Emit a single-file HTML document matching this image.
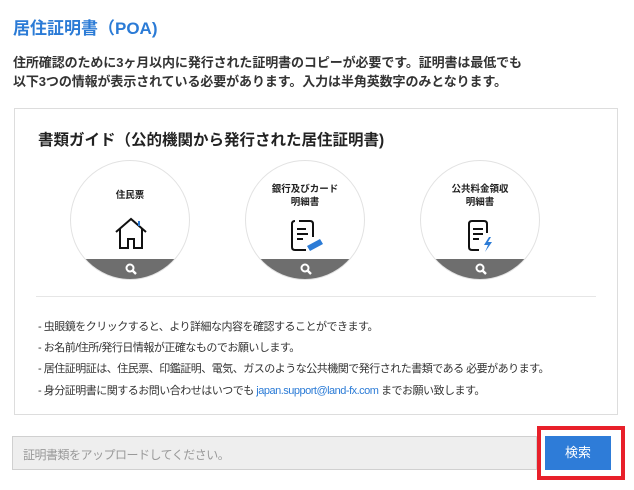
<!DOCTYPE html>
<html><head><meta charset="utf-8"><style>
*{margin:0;padding:0;box-sizing:border-box}
body{width:634px;height:490px;background:#fff;font-family:"Liberation Sans","Noto Sans CJK JP",sans-serif;color:#222;position:relative;overflow:hidden}
.abs{position:absolute;white-space:nowrap}
h1{position:absolute;left:13px;top:14px;font-size:17px;color:#2b7bd6;font-weight:bold}
.p{position:absolute;left:13px;font-size:13px;font-weight:bold;color:#333;letter-spacing:-0.1px}
.box{position:absolute;left:14px;top:108px;width:604px;height:307px;border:1px solid #ddd}
.c{position:absolute;top:160px;width:120px;height:120px;border-radius:50%;border:1px solid #e2e2e2;overflow:hidden;background:#fff}
.c .g{position:absolute;left:0;right:0;top:98px;height:30px;background:#6e6e6e}
.c .t{position:absolute;left:0;right:0;text-align:center;font-size:9.5px;color:#222;line-height:13px;font-weight:bold}
.c svg{position:absolute}
.n{position:absolute;left:38px;font-size:11px;color:#333;letter-spacing:-0.5px;white-space:nowrap}
</style></head><body>
<h1>居住証明書（POA)</h1>
<div class="p" style="top:52px">住所確認のために3ヶ月以内に発行された証明書のコピーが必要です。証明書は最低でも</div>
<div class="p" style="top:71px">以下3つの情報が表示されている必要があります。入力は半角英数字のみとなります。</div>
<div class="box"></div>
<div class="abs" style="left:38px;top:128px;font-size:15.5px;font-weight:bold;color:#222">書類ガイド（公的機関から発行された居住証明書)</div>

<div class="c" style="left:70px"><div class="t" style="top:28px">住民票</div>
<svg style="left:43px;top:56px" width="36" height="34" viewBox="0 0 36 34"><path d="M2 15 L17 2 L32 15 M6 12 V31 H14 V22 H20 V31 H28 V12" fill="none" stroke="#111" stroke-width="2"/><path d="M25 4 V9" stroke="#2b7bd6" stroke-width="2"/></svg>
<div class="g"></div>
<svg style="left:54px;top:102px" width="12" height="12" viewBox="0 0 12 12"><circle cx="5" cy="5" r="3.5" fill="none" stroke="#fff" stroke-width="2"/><path d="M7.5 7.5 L11 11" stroke="#fff" stroke-width="2.4"/></svg></div>

<div class="c" style="left:245px"><div class="t" style="top:22px">銀行及びカード<br>明細書</div>
<svg style="left:44px;top:58px" width="36" height="34" viewBox="0 0 36 34"><path d="M9 2 H20 Q23 2 23 5 V18 M16 31 H5 Q2 31 2 28 V5 Q2 2 5 2" fill="none" stroke="#111" stroke-width="2"/><path d="M7 10 H16 M7 15 H18 M7 20 H13" stroke="#111" stroke-width="2"/><path d="M17 27 L30 20 L33 25 L20 32 Z" fill="#2b7bd6"/></svg>
<div class="g"></div>
<svg style="left:54px;top:102px" width="12" height="12" viewBox="0 0 12 12"><circle cx="5" cy="5" r="3.5" fill="none" stroke="#fff" stroke-width="2"/><path d="M7.5 7.5 L11 11" stroke="#fff" stroke-width="2.4"/></svg></div>

<div class="c" style="left:420px"><div class="t" style="top:22px">公共料金領収<br>明細書</div>
<svg style="left:46px;top:58px" width="30" height="34" viewBox="0 0 30 34"><path d="M12 31 H5 Q2 31 2 28 V5 Q2 2 5 2 H17 Q20 2 20 5 V14" fill="none" stroke="#111" stroke-width="2"/><path d="M6 10 H16 M6 15 H16 M6 20 H12" stroke="#111" stroke-width="2"/><path d="M22 18 L17 26 H21 L18 33 L25 23 H21 L24 18 Z" fill="#2b7bd6"/></svg>
<div class="g"></div>
<svg style="left:54px;top:102px" width="12" height="12" viewBox="0 0 12 12"><circle cx="5" cy="5" r="3.5" fill="none" stroke="#fff" stroke-width="2"/><path d="M7.5 7.5 L11 11" stroke="#fff" stroke-width="2.4"/></svg></div>

<div style="position:absolute;left:36px;top:296px;width:560px;height:1px;background:#e6e6e6"></div>
<div class="n" style="top:318px">- 虫眼鏡をクリックすると、より詳細な内容を確認することができます。</div>
<div class="n" style="top:339px">- お名前/住所/発行日情報が正確なものでお願いします。</div>
<div class="n" style="top:360px">- 居住証明証は、住民票、印鑑証明、電気、ガスのような公共機関で発行された書類である 必要があります。</div>
<div class="n" style="top:382px">- 身分証明書に関するお問い合わせはいつでも <span style="color:#2b7bd6">japan.support@land-fx.com</span> までお願い致します。</div>

<div style="position:absolute;left:12px;top:436px;width:525px;height:34px;background:#eee;border:1px solid #d0d0d0;font-size:12px;color:#999;padding:9px 10px;letter-spacing:-0.5px">証明書類をアップロードしてください。</div>
<div style="position:absolute;left:537px;top:426px;width:88px;height:54px;border:4px solid #e8202a"></div>
<div style="position:absolute;left:545px;top:436px;width:66px;height:34px;background:#2e7cd8;color:#fff;font-size:13px;text-align:center;line-height:34px">検索</div>
</body></html>
